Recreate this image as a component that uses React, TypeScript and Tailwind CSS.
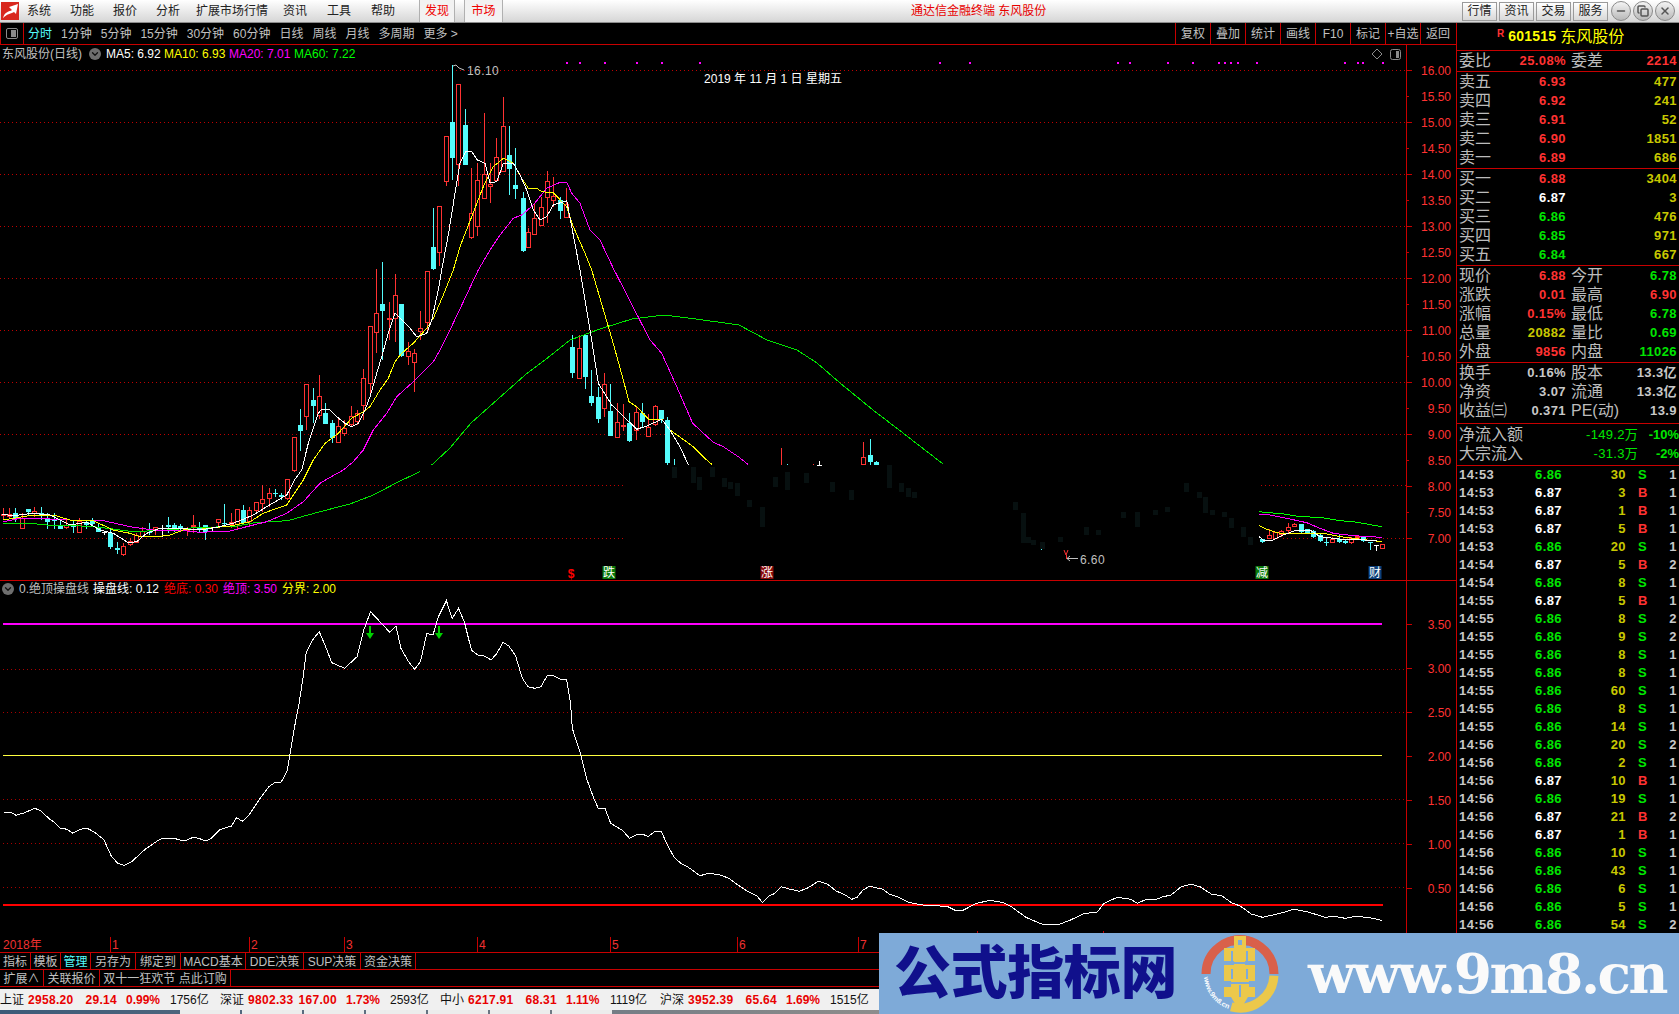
import { Minus, Copy, X, ChevronDown } from "lucide-react"

type Candle = [number, number, number, number, number, string]
type Pts = number[][]

const RED = "#ff3232"
const CYAN = "#54fcfc"
const LINE = "border-[#c80000]"

// all traces below are in crop coordinates, map() brings them back to page pixels
const map = (pts: Pts, ox: number, oy: number, sx = 3): Pts => pts.map(([x, y]) => [ox + x / sx, oy + y / 3])
const mapCandles = (list: Candle[], ox: number, oy: number): Candle[] =>
  list.map(([x, h, t, b, l, c]) => [Math.round(ox + x / 3), oy + h / 3, oy + t / 3, oy + b / 3, oy + l / 3, c])
const toStr = (pts: Pts) => pts.map(([x, y]) => `${x.toFixed(1)},${y.toFixed(1)}`).join(" ")

const candles: Candle[] = [
  ...mapCandles(
    [
      [8, 115, 133, 137, 150, "r"], [28, 115, 132, 142, 145, "r"], [46, 115, 130, 145, 155, "c"], [66, 128, 145, 178, 178, "r"],
      [85, 118, 118, 126, 135, "c"], [103, 112, 122, 132, 140, "r"], [124, 112, 128, 136, 150, "c"], [142, 130, 148, 155, 178, "c"],
      [162, 130, 148, 152, 178, "c"], [180, 150, 168, 176, 178, "c"], [198, 150, 165, 175, 178, "r"], [218, 150, 168, 172, 188, "c"],
      [238, 145, 152, 188, 188, "r"], [258, 150, 155, 165, 178, "c"], [275, 145, 152, 162, 170, "c"], [295, 160, 175, 185, 185, "c"],
      [313, 183, 187, 187, 196, "w"], [331, 175, 190, 232, 236, "c"], [351, 217, 235, 240, 253, "c"], [370, 220, 227, 255, 257, "r"],
      [389, 205, 212, 226, 228, "r"], [408, 190, 195, 218, 220, "r"], [427, 172, 183, 200, 202, "r"], [446, 160, 187, 190, 195, "c"],
      [466, 170, 172, 180, 195, "r"], [485, 165, 175, 178, 200, "w"], [503, 140, 165, 172, 190, "c"], [522, 160, 165, 178, 185, "c"],
      [541, 162, 168, 178, 185, "c"], [560, 170, 178, 182, 198, "r"], [580, 135, 165, 172, 190, "r"], [598, 155, 172, 178, 185, "c"],
      [616, 165, 165, 187, 210, "c"], [636, 170, 172, 178, 187, "w"], [655, 148, 148, 160, 172, "r"], [672, 102, 158, 162, 170, "c"],
      [692, 130, 155, 165, 175, "r"], [712, 118, 118, 165, 178, "r"], [730, 105, 120, 158, 162, "c"], [748, 110, 120, 155, 165, "r"],
      [769, 95, 95, 122, 125, "r"], [787, 45, 88, 103, 125, "r"], [806, 55, 70, 88, 110, "r"], [826, 58, 68, 72, 82, "c"],
      [844, 70, 75, 82, 90, "c"], [862, 28, 28, 88, 90, "r"],
    ],
    0,
    470,
  ),
  ...mapCandles(
    [
      [193, 592, 592, 692, 695, "r"], [211, 508, 555, 572, 632, "c"], [229, 433, 433, 530, 570, "r"], [250, 445, 480, 497, 550, "c"],
      [268, 405, 469, 527, 537, "r"], [286, 490, 520, 552, 552, "c"], [307, 540, 550, 593, 610, "c"], [325, 538, 558, 608, 610, "r"],
      [343, 540, 565, 582, 587, "r"], [364, 498, 529, 555, 558, "r"], [382, 510, 520, 545, 555, "r"], [400, 388, 415, 497, 540, "r"],
      [421, 259, 259, 432, 470, "r"], [439, 87, 220, 278, 338, "r"], [457, 67, 192, 213, 360, "c"], [478, 186, 235, 240, 300, "r"],
      [496, 102, 166, 238, 305, "r"], [514, 192, 192, 348, 350, "c"], [535, 307, 332, 350, 375, "r"], [553, 327, 340, 370, 455, "r"],
      [571, 213, 265, 277, 300, "r"], [592, 94, 94, 250, 280, "r"],
    ],
    230,
    240,
  ),
  ...mapCandles(
    [
      [280, 475, 590, 657, 660, "c"], [298, 468, 468, 610, 648, "r"], [319, 259, 259, 395, 408, "r"], [337, 45, 216, 323, 390, "c"],
      [355, 102, 102, 345, 408, "r"], [376, 178, 225, 345, 345, "c"], [394, 355, 490, 564, 566, "r"], [412, 340, 391, 530, 558, "r"],
      [433, 190, 373, 446, 446, "r"], [451, 340, 403, 412, 458, "r"], [469, 265, 322, 394, 394, "r"], [490, 142, 229, 365, 365, "r"],
      [508, 228, 315, 357, 435, "c"], [526, 295, 405, 416, 447, "c"], [548, 427, 444, 603, 606, "c"], [565, 535, 547, 593, 593, "r"],
      [583, 460, 505, 554, 554, "r"], [604, 440, 472, 527, 527, "r"], [622, 363, 394, 445, 518, "r"], [640, 380, 439, 452, 470, "r"],
      [661, 440, 450, 482, 506, "c"], [679, 415, 462, 503, 503, "r"],
    ],
    340,
    50,
  ),
  ...mapCandles(
    [
      [67, -15, 20, 98, 113, "c"], [88, -15, 25, 116, 116, "r"], [106, -15, -15, 110, 146, "c"], [124, 90, 168, 188, 198, "c"],
      [145, 140, 171, 238, 250, "c"], [163, 100, 133, 208, 232, "r"], [181, 132, 213, 288, 288, "c"], [202, 190, 247, 293, 293, "r"],
      [220, 192, 256, 262, 272, "r"], [238, 220, 250, 303, 305, "c"], [259, 200, 217, 272, 300, "r"], [277, 190, 220, 245, 262, "c"],
      [295, 222, 262, 290, 290, "r"], [316, 195, 199, 255, 258, "r"], [334, 210, 210, 238, 250, "c"], [352, 230, 240, 370, 375, "c"],
      [373, 358, 374, 374, 374, "t"], [694, 325, 374, 374, 374, "u"], [711, 372, 374, 374, 374, "t"], [790, 372, 374, 374, 374, "u"],
      [808, 363, 374, 374, 374, "w"], [940, 307, 352, 374, 374, "r"], [961, 297, 345, 366, 374, "c"], [979, 364, 366, 374, 374, "c"],
    ],
    550,
    340,
  ),
  ...mapCandles(
    [
      [787, 176, 178, 185, 190, "c"], [806, 148, 165, 177, 178, "r"], [826, 155, 155, 178, 178, "r"], [844, 150, 152, 165, 170, "r"],
      [863, 130, 142, 152, 158, "r"], [883, 128, 133, 142, 142, "r"], [902, 132, 132, 155, 158, "c"], [920, 146, 148, 158, 162, "c"],
      [940, 150, 152, 170, 175, "c"], [959, 158, 165, 182, 185, "c"], [977, 175, 185, 187, 197, "c"], [997, 170, 176, 188, 190, "r"],
      [1016, 165, 176, 185, 188, "c"], [1035, 178, 184, 188, 192, "c"], [1053, 172, 175, 190, 192, "r"], [1072, 165, 167, 172, 180, "r"],
      [1090, 167, 170, 182, 185, "c"], [1111, 185, 185, 190, 210, "c"], [1129, 195, 195, 197, 212, "w"], [1147, 193, 193, 208, 208, "r"],
    ],
    1000,
    480,
  ),
]

const ma5 = [
  ...map([[5, 133], [40, 137], [100, 130], [150, 135], [210, 165], [260, 157], [300, 180], [340, 190], [385, 218], [410, 215], [440, 190], [480, 175], [540, 175], [600, 180], [650, 172], [700, 160], [760, 135], [800, 110], [860, 75]], 0, 470),
  ...map([[195, 718], [215, 690], [235, 610], [265, 520], [275, 508], [300, 510], [320, 530], [345, 550], [365, 560], [385, 550], [405, 510], [420, 470], [440, 400], [455, 350], [475, 280], [495, 220], [515, 240], [540, 265], [560, 290], [590, 280], [605, 240], [625, 150]], 230, 240),
  ...map([[305, 660], [325, 555], [345, 430], [360, 340], [378, 303], [395, 305], [412, 330], [435, 340], [450, 398], [470, 395], [490, 340], [520, 340], [540, 375], [560, 420], [580, 480], [600, 510], [620, 500], [640, 465], [680, 452], [695, 530], [720, 660]], 340, 50),
  ...map([[125, 0], [145, 130], [185, 195], [240, 248], [260, 268], [290, 258], [335, 238], [360, 270], [390, 320], [415, 374]], 550, 340),
]
const ma10 = [
  ...map([[8, 150], [40, 145], [100, 135], [160, 135], [210, 150], [280, 152], [340, 180], [390, 190], [420, 200], [470, 200], [510, 195], [550, 180], [600, 178], [650, 172], [690, 168], [750, 155], [790, 130], [830, 115], [860, 105]], 0, 470),
  ...map([[220, 720], [250, 660], [285, 610], [325, 580], [365, 535], [400, 515], [420, 500], [450, 450], [475, 415], [495, 365], [515, 340], [550, 310], [590, 265], [610, 235], [640, 165], [660, 115]], 230, 240),
  ...map([[340, 660], [360, 590], [395, 500], [430, 410], [460, 350], [490, 325], [520, 340], [545, 385], [565, 415], [590, 415], [605, 425], [640, 428], [680, 470], [700, 530], [735, 610], [755, 660]], 340, 50),
  ...map([[187, 0], [220, 120], [237, 185], [260, 200], [295, 237], [335, 237], [360, 270], [430, 320], [470, 360], [487, 374]], 550, 340),
]
const ma20 = [
  ...map([[10, 155], [60, 145], [150, 147], [210, 150], [300, 150], [345, 160], [400, 172], [460, 180], [530, 180], [600, 187], [690, 183], [740, 170], [800, 155], [860, 130], [910, 95], [960, 40]], 0, 470),
  ...map([[290, 718], [340, 690], [370, 665], [400, 630], [430, 570], [470, 520], [500, 470], [550, 425], [610, 365], [630, 330], [660, 270]], 230, 240),
  ...map([[415, 660], [450, 600], [480, 555], [520, 505], [545, 495], [580, 465], [620, 415], [660, 397], [680, 397], [695, 430], [720, 460], [750, 540], [780, 570], [820, 655]], 340, 50),
  ...map([[300, 0], [335, 40], [380, 140], [428, 250], [490, 307], [520, 320], [565, 350], [595, 374]], 550, 340),
]
const ma60a = [
  ...map([[8, 160], [90, 160], [140, 165], [200, 165], [300, 172], [400, 185], [500, 180], [600, 172], [700, 170], [770, 157], [830, 155], [870, 150], [960, 125], [1050, 102], [1120, 75], [1200, 33]], 0, 470),
  [420, 471.7],
]
const ma60b: Pts = [[431.7, 465], [450, 448], [471, 423], [525, 375], [550, 356], [570, 340], [600, 329], [632, 319], [664, 315], [696, 319], [739, 325], [767, 340], [797, 350], [817, 363], [840, 383], [873, 410], [903, 433], [943, 464]]

const tail = {
  white: map([[778, 170], [790, 180], [820, 180], [850, 165], [890, 150], [930, 150], [960, 170], [1000, 175], [1040, 180], [1080, 178], [1110, 182], [1130, 182]], 1000, 480),
  yellow: map([[778, 137], [800, 148], [830, 158], [860, 162], [940, 160], [980, 162], [1020, 170], [1060, 175], [1100, 180], [1145, 185]], 1000, 480),
  magenta: map([[778, 103], [800, 103], [860, 115], [920, 128], [960, 145], [1000, 160], [1060, 167], [1145, 172]], 1000, 480),
  green: map([[778, 95], [800, 98], [840, 100], [900, 110], [960, 112], [1020, 122], [1060, 125], [1100, 132], [1145, 140]], 1000, 480),
}

const indicator = [
  ...map([[8, 666], [24, 666], [36, 676], [55, 668], [78, 655], [92, 663], [110, 686], [120, 695], [135, 714], [150, 718], [163, 730], [180, 718], [195, 715], [210, 725], [232, 748], [250, 800], [264, 820], [278, 826], [295, 815], [325, 778], [358, 748], [370, 745], [390, 745], [405, 751], [418, 751], [432, 742], [445, 745], [460, 753], [472, 746], [492, 720], [505, 713], [518, 709], [530, 683], [543, 694], [558, 675], [580, 630], [602, 590], [615, 578], [630, 576], [643, 542], [650, 490], [660, 410], [670, 340], [678, 270], [686, 188], [700, 150], [715, 125], [728, 165], [743, 218], [755, 225], [772, 235], [800, 200], [815, 120], [830, 65], [858, 105], [873, 127], [887, 108], [898, 175], [915, 215], [929, 238], [942, 215], [956, 130], [970, 135], [982, 80], [1000, 32], [1013, 85], [1027, 55], [1040, 95], [1056, 180], [1070, 195], [1085, 198], [1100, 210], [1113, 190], [1127, 157], [1140, 168], [1155, 198], [1170, 265], [1183, 290], [1198, 295], [1212, 290], [1225, 258], [1238, 256], [1255, 268], [1269, 268], [1278, 340], [1282, 415], [1300, 490], [1315, 570], [1330, 625], [1340, 655], [1355, 655], [1368, 700], [1395, 722], [1410, 745], [1425, 735], [1440, 733], [1452, 740], [1468, 723], [1482, 726], [1495, 765], [1510, 802], [1525, 820], [1540, 830], [1568, 857]], 0, 590, 2.24),
  ...map([[20, 220], [45, 225], [65, 235], [85, 255], [105, 273], [128, 288], [140, 308], [155, 288], [168, 280], [182, 260], [200, 267], [222, 274], [240, 265], [265, 244], [285, 252], [305, 273], [325, 285], [340, 298], [352, 292], [365, 270], [380, 259], [410, 268], [425, 283], [445, 292], [470, 308], [500, 315], [530, 317], [555, 320], [570, 330], [590, 330], [620, 310], [650, 301], [680, 308], [695, 318], [730, 352], [765, 372], [805, 373], [830, 360], [860, 341], [890, 336], [905, 310], [935, 292], [965, 298], [980, 310], [1000, 298], [1025, 297], [1035, 291], [1055, 285], [1078, 260], [1100, 253], [1120, 260], [1145, 282], [1170, 288], [1190, 308], [1210, 318], [1235, 342], [1260, 352], [1300, 340], [1330, 328], [1360, 335], [1400, 352], [1420, 349], [1445, 355], [1470, 349], [1500, 353], [1527, 361]], 700, 800, 2.24),
]

// barely visible candles left under the faded part of the chart
const ghosts: number[][] = [
  [674, 467, 478], [693, 467, 483], [699, 477, 490], [712, 467, 477], [724, 478, 487], [730, 482, 489], [737, 483, 496], [749, 500, 507], [762, 507, 527],
  [775, 477, 487], [787, 472, 490], [806, 473, 483], [832, 482, 492], [851, 490, 500], [889, 465, 488], [901, 483, 492], [908, 488, 497], [914, 492, 498],
  [1015, 502, 510], [1023, 513, 543], [1028, 537, 543], [1033, 540, 545], [1042, 542, 549], [1060, 537, 542], [1086, 527, 535], [1098, 530, 535],
  [1123, 512, 518], [1137, 512, 527], [1155, 510, 515], [1167, 507, 512], [1186, 483, 492], [1199, 492, 498], [1205, 497, 513], [1212, 510, 515],
  [1224, 512, 517], [1231, 518, 528], [1243, 527, 537], [1250, 537, 545],
]

const magentaDots = [566, 579, 604, 636, 661, 699, 939, 969, 1117, 1129, 1167, 1192, 1218, 1224, 1230, 1237, 1256, 1344, 1357, 1362, 1382]
const mainGrid = [70, 122, 174, 226, 278, 330, 382, 434]
const indicatorGrid = [669, 712, 799, 843, 887]
const priceAxis = ["16.00", "15.50", "15.00", "14.50", "14.00", "13.50", "13.00", "12.50", "12.00", "11.50", "11.00", "10.50", "10.00", "9.50", "9.00", "8.50", "8.00", "7.50", "7.00"]
const indAxis = ["3.50", "3.00", "2.50", "2.00", "1.50", "1.00", "0.50"]

function CandleMark({ c }: { c: Candle }) {
  const [x, hi, top, bot, lo, kind] = c
  const yh = Math.round(hi)
  const yt = Math.round(top)
  const yb = Math.round(bot)
  const yl = Math.round(lo)
  if (kind === "t" || kind === "u") {
    return <rect x={x} y={yh} width={1} height={yt - yh} fill={kind === "t" ? CYAN : RED} />
  }
  if (kind === "w") {
    return (
      <g fill="#fff">
        <rect x={x} y={yh} width={1} height={Math.max(yl - yh, 1)} />
        <rect x={x - 2} y={yt} width={5} height={1} />
      </g>
    )
  }
  const color = kind === "r" ? RED : CYAN
  return (
    <g>
      <rect x={x} y={yh} width={1} height={Math.max(yl - yh, 1)} fill={color} />
      {kind === "r" ? (
        <rect x={x - 1.5} y={yt + 0.5} width={4} height={Math.max(yb - yt - 1, 1)} fill="#000" stroke={color} strokeWidth={1} />
      ) : (
        <rect x={x - 2} y={yt} width={5} height={Math.max(yb - yt, 1)} fill={color} />
      )}
    </g>
  )
}

function Poly({ pts, color }: { pts: Pts; color: string }) {
  return <polyline points={toStr(pts)} fill="none" stroke={color} strokeWidth={1} shapeRendering="crispEdges" />
}

function Signal({ x, label, color }: { x: number; label: string; color: string }) {
  return (
    <g>
      <rect x={x - 6.5} y={566} width={13} height={13} fill={color} />
      <text x={x} y={577} fontSize={12} fill="#fff" textAnchor="middle">
        {label}
      </text>
    </g>
  )
}

function ChartCanvas() {
  return (
    <svg width={1456} height={892} viewBox="0 45 1456 892" className="block">
      {mainGrid.map((y) => (
        <line key={y} x1={0} x2={1406} y1={y + 0.5} y2={y + 0.5} stroke="#c00000" strokeDasharray="1 3" />
      ))}
      {[485, 538].map((y) => (
        <g key={y}>
          <line x1={2} x2={625} y1={y + 0.5} y2={y + 0.5} stroke="#c00000" strokeDasharray="1 3" />
          <line x1={y === 485 ? 1261 : 1283} x2={1406} y1={y + 0.5} y2={y + 0.5} stroke="#c00000" strokeDasharray="1 3" />
        </g>
      ))}
      {indicatorGrid.map((y) => (
        <line key={y} x1={3} x2={1406} y1={y + 0.5} y2={y + 0.5} stroke="#a80000" strokeDasharray="1 3" />
      ))}

      {ghosts.map(([x, a, b], i) => (
        <rect key={i} x={x - 2} y={a} width={5} height={b - a} fill="#071010" />
      ))}

      {magentaDots.map((x) => (
        <rect key={x} x={x} y={62} width={2} height={2} fill="#ff00ff" />
      ))}

      <g shapeRendering="crispEdges">
        {candles.map((c, i) => (
          <CandleMark key={i} c={c} />
        ))}
      </g>
      <Poly pts={ma60a} color="#00e600" />
      <Poly pts={ma60b} color="#00e600" />
      <Poly pts={ma20} color="#ff00ff" />
      <Poly pts={ma10} color="#ffff00" />
      <Poly pts={ma5} color="#ffffff" />
      <Poly pts={tail.green} color="#00ff00" />
      <Poly pts={tail.magenta} color="#ff00ff" />
      <Poly pts={tail.yellow} color="#ffff00" />
      <Poly pts={tail.white} color="#ffffff" />

      <polyline points="453,66 456,65 459,68 464,70" fill="none" stroke="#c0c0c0" />
      <text x={467} y={75} fontSize={12} fill="#c0c0c0" letterSpacing={0.4}>
        16.10
      </text>
      <text x={773} y={83} fontSize={12} fill="#fff" textAnchor="middle">
        2019 年 11 月 1 日 星期五
      </text>

      <polyline points="1064,550 1066,555 1068,550" fill="none" stroke={RED} />
      <rect x={1066} y={555} width={1} height={4} fill={RED} />
      <path d="M1078 558.5 H1067 M1070 556 L1067 558.5 L1070 561" fill="none" stroke="#c0c0c0" />
      <text x={1080} y={564} fontSize={12} fill="#c0c0c0" letterSpacing={0.4}>
        6.60
      </text>
      <rect x={1041} y={549} width={1} height={1} fill={CYAN} />

      <text x={571} y={578} fontSize={12} fontWeight={700} fill="#ff0000" textAnchor="middle">
        $
      </text>
      <Signal x={609} label="跌" color="#0a7a0a" />
      <Signal x={767} label="涨" color="#8a0a0a" />
      <Signal x={1262} label="减" color="#0a7a0a" />
      <Signal x={1375} label="财" color="#0c3f7a" />

      <path d="M1377 49 L1382 54 L1377 59 L1372 54 Z" fill="none" stroke="#8a8a8a" />
      <rect x={1390.5} y={49.5} width={10} height={10} rx={2} fill="#000" stroke="#8a8a8a" />
      <rect x={1396} y={51} width={3} height={7} fill="#8a8a8a" />

      {/* lines of the lower pane */}
      <rect x={3} y={623} width={1379} height={2} fill="#ff00ff" />
      <rect x={3} y={755} width={1379} height={1} fill="#ffff40" />
      <rect x={3} y={904} width={1380} height={2} fill="#ff0000" />
      <Poly pts={indicator} color="#ffffff" />
      {[370, 439].map((x) => (
        <path key={x} d={`M${x - 1} 626 H${x + 1} V633 H${x + 4} L${x} 639 L${x - 4} 633 H${x - 1} Z`} fill="#00d000" />
      ))}

      {/* frame and axes */}
      <rect x={0} y={580} width={1456} height={1} fill="#c80000" />
      <rect x={1406} y={45} width={1} height={892} fill="#c80000" />
      {priceAxis.map((p, i) => {
        const y = 70 + i * 26
        return (
          <g key={p}>
            <rect x={1406} y={y} width={i % 2 ? 3 : 6} height={1} fill="#c80000" />
            <text x={1451} y={y + 5} fontSize={12} fill={RED} textAnchor="end">
              {p}
            </text>
          </g>
        )
      })}
      {indAxis.map((p, i) => {
        const y = 624 + i * 44
        return (
          <g key={p}>
            <rect x={1406} y={y} width={6} height={1} fill="#c80000" />
            <text x={1451} y={y + 5} fontSize={12} fill={RED} textAnchor="end">
              {p}
            </text>
          </g>
        )
      })}
      <rect x={977} y={931} width={1} height={6} fill="#c80000" />
      <rect x={1103} y={931} width={1} height={6} fill="#c80000" />
    </svg>
  )
}

function PaneToggle() {
  return (
    <span className="flex h-[11px] w-[12px] justify-end rounded-[2px] border border-[#8a8a8a] p-px">
      <span className="block h-full w-[5px] bg-[#8a8a8a]" />
    </span>
  )
}

function RoundChevron() {
  return (
    <span className="flex h-[12px] w-[12px] items-center justify-center rounded-full bg-[#6e6e6e]">
      <ChevronDown size={10} strokeWidth={3} color="#111" />
    </span>
  )
}

function TopBar() {
  const menus = ["系统", "功能", "报价", "分析"]
  const menus2 = ["资讯", "工具", "帮助"]
  return (
    <div className="flex h-[23px] items-center border-b border-[#8c8c8c] bg-gradient-to-b from-white to-[#d6d6d6] text-[12px] text-[#222]">
      <svg width={18} height={18} viewBox="0 0 18 18" className="ml-px mr-2 shrink-0">
        <rect width={18} height={18} fill="#d8281e" />
        <path d="M2 16 C4 9 8 10 11 8 L8 5 L17 2 L15 12 L13 10 C9 12 6 12 2 16 Z" fill="#fff" />
      </svg>
      <div className="flex gap-[19px]">
        {menus.map((m) => (
          <span key={m}>{m}</span>
        ))}
      </div>
      <span className="ml-[16px]">扩展市场行情</span>
      <div className="ml-[15px] flex gap-[20px]">
        {menus2.map((m) => (
          <span key={m}>{m}</span>
        ))}
      </div>
      <div className="ml-[24px] flex h-full w-[36px] items-center justify-center border-x border-[#b0b0b0] bg-[#f2f2f2] text-[#f00000]">发现</div>
      <div className="ml-[9px] flex h-full w-[39px] items-center justify-center border-x border-[#b0b0b0] bg-[#f2f2f2] text-[#f00000]">市场</div>
      <div className="flex-1 pr-[8px] text-center text-[#e80000]">通达信金融终端 东风股份</div>
      <div className="flex gap-[2px]">
        {["行情", "资讯", "交易", "服务"].map((m) => (
          <div key={m} className="flex h-[19px] w-[35px] items-center justify-center border border-[#9a9a9a] bg-gradient-to-b from-white to-[#d8d8d8]">
            {m}
          </div>
        ))}
      </div>
      <div className="ml-[3px] mr-[4px] flex gap-[2px]">
        {[Minus, Copy, X].map((Icon, i) => (
          <div key={i} className="flex h-[20px] w-[20px] items-center justify-center rounded-full border border-[#8a8a8a] bg-gradient-to-b from-[#f4f4f4] to-[#b8b8b8]">
            <Icon size={12} strokeWidth={3} color="#555" />
          </div>
        ))}
      </div>
    </div>
  )
}

function Toolbar() {
  const left = ["1分钟", "5分钟", "15分钟", "30分钟", "60分钟", "日线", "周线", "月线", "多周期", "更多 >"]
  const right = ["复权", "叠加", "统计", "画线", "F10", "标记", "+自选", "返回"]
  return (
    <div className={`flex h-[22px] items-center border-b ${LINE} text-[12px] text-[#c0c0c0]`}>
      <div className={`flex h-full w-[24px] items-center justify-center border-x ${LINE}`}>
        <PaneToggle />
      </div>
      <div className="ml-[4px] flex gap-[9px]">
        <span className="text-[#54fcfc]">分时</span>
        {left.map((t) => (
          <span key={t}>{t}</span>
        ))}
      </div>
      <div className="ml-auto flex h-full pr-px">
        {right.map((t) => (
          <span key={t} className={`flex h-full w-[35px] items-center justify-center border-l ${LINE} whitespace-nowrap`}>
            {t}
          </span>
        ))}
      </div>
    </div>
  )
}

function TimeAxis() {
  const cells = [
    { w: "w-[110px]", t: "2018年" },
    { w: "w-[139px]", t: "1" },
    { w: "w-[95px]", t: "2" },
    { w: "w-[133px]", t: "3" },
    { w: "w-[133px]", t: "4" },
    { w: "w-[127px]", t: "5" },
    { w: "w-[121px]", t: "6" },
    { w: "flex-1", t: "7" },
  ]
  return (
    <div className={`flex h-[16px] items-center border-b ${LINE} text-[12px] text-[#f03030]`}>
      {cells.map((c, i) => (
        <span key={c.t} className={`${c.w} h-full leading-[16px] ${i ? `border-l ${LINE} pl-px` : "pl-[3px]"}`}>
          {c.t}
        </span>
      ))}
    </div>
  )
}

function TabRow({ items }: { items: { t: string; w: string; on?: boolean }[] }) {
  return (
    <div className={`flex h-[17px] items-center border-b ${LINE} text-[12px] text-[#c0c0c0]`}>
      {items.map((i) => (
        <span key={i.t} className={`${i.w} flex h-full items-center justify-center border-r ${LINE} whitespace-nowrap pt-px ${i.on ? "text-[#54fcfc]" : ""}`}>
          {i.t}
        </span>
      ))}
    </div>
  )
}

function LeftColumn() {
  return (
    <div className="flex w-[1456px] shrink-0 flex-col">
      <Toolbar />
      <div className="relative h-[892px]">
        <ChartCanvas />
        <div className="absolute left-[2px] top-[1px] flex h-[16px] items-center text-[12px]">
          <span className="w-[84px] text-[#c0c0c0]">东风股份(日线)</span>
          <span className="ml-[3px]">
            <RoundChevron />
          </span>
          <span className="ml-[5px] w-[58px] text-white">MA5: 6.92</span>
          <span className="w-[65px] text-[#ffff00]">MA10: 6.93</span>
          <span className="w-[65px] text-[#ff00ff]">MA20: 7.01</span>
          <span className="text-[#00ff00]">MA60: 7.22</span>
        </div>
        <div className="absolute left-[2px] top-[536px] flex h-[16px] items-center text-[12px]">
          <RoundChevron />
          <span className="ml-[5px] w-[74px] text-[#c0c0c0]">0.绝顶操盘线</span>
          <span className="w-[71px] text-white">操盘线: 0.12</span>
          <span className="w-[59px] text-[#ff0000]">绝底: 0.30</span>
          <span className="w-[59px] text-[#ff00ff]">绝顶: 3.50</span>
          <span className="text-[#ffff00]">分界: 2.00</span>
        </div>
      </div>
      <TimeAxis />
      <TabRow
        items={[
          { t: "指标", w: "w-[31px]" },
          { t: "模板", w: "w-[30px]" },
          { t: "管理", w: "w-[30px]", on: true },
          { t: "另存为", w: "w-[45px]" },
          { t: "绑定到", w: "w-[45px]" },
          { t: "MACD基本", w: "w-[65px]" },
          { t: "DDE决策", w: "w-[58px]" },
          { t: "SUP决策", w: "w-[57px]" },
          { t: "资金决策", w: "w-[55px]" },
        ]}
      />
      <TabRow
        items={[
          { t: "扩展∧", w: "w-[44px]" },
          { t: "关联报价", w: "w-[56px]" },
          { t: "双十一狂欢节 点此订购", w: "w-[131px]" },
        ]}
      />
    </div>
  )
}

const num = "text-[13px] font-bold tracking-[0.4px]"
const label = "text-[16px] text-[#bcbcbc]"

function BookRow({ name, price, priceColor, qty }: { name: string; price: string; priceColor: string; qty: string }) {
  return (
    <div className="grid h-[19px] grid-cols-[107px_106px] gap-x-[5px] pl-[2px] leading-[19px]">
      <div className="flex justify-between">
        <span className={label}>{name}</span>
        <span className={`${num} ${priceColor}`}>{price}</span>
      </div>
      <div className={`${num} text-right text-[#c8c800]`}>{qty}</div>
    </div>
  )
}

function PairRow({ a, av, ac, b, bv, bc }: { a: string; av: string; ac: string; b: string; bv: string; bc: string }) {
  return (
    <div className="grid h-[19px] grid-cols-[107px_106px] gap-x-[5px] pl-[2px] leading-[19px]">
      <div className="flex justify-between">
        <span className={label}>{a}</span>
        <span className={`${num} ${ac}`}>{av}</span>
      </div>
      <div className="flex justify-between">
        <span className={label}>{b}</span>
        <span className={`${num} ${bc}`}>{bv}</span>
      </div>
    </div>
  )
}

const R = "text-[#ff3232]"
const G = "text-[#00e600]"
const Y = "text-[#c8c800]"
const W = "text-[#c8c8c8]"

const ticks: [string, string, string, string, string][] = [
  ["14:53", "6.86", "30", "S", "1"], ["14:53", "6.87", "3", "B", "1"], ["14:53", "6.87", "1", "B", "1"], ["14:53", "6.87", "5", "B", "1"],
  ["14:53", "6.86", "20", "S", "1"], ["14:54", "6.87", "5", "B", "2"], ["14:54", "6.86", "8", "S", "1"], ["14:55", "6.87", "5", "B", "1"],
  ["14:55", "6.86", "8", "S", "2"], ["14:55", "6.86", "9", "S", "2"], ["14:55", "6.86", "8", "S", "1"], ["14:55", "6.86", "8", "S", "1"],
  ["14:55", "6.86", "60", "S", "1"], ["14:55", "6.86", "8", "S", "1"], ["14:55", "6.86", "14", "S", "1"], ["14:56", "6.86", "20", "S", "2"],
  ["14:56", "6.86", "2", "S", "1"], ["14:56", "6.87", "10", "B", "1"], ["14:56", "6.86", "19", "S", "1"], ["14:56", "6.87", "21", "B", "2"],
  ["14:56", "6.87", "1", "B", "1"], ["14:56", "6.86", "10", "S", "1"], ["14:56", "6.86", "43", "S", "1"], ["14:56", "6.86", "6", "S", "1"],
  ["14:56", "6.86", "5", "S", "1"], ["14:56", "6.86", "54", "S", "2"],
]

function QuotePanel() {
  return (
    <div className={`flex w-[223px] shrink-0 flex-col overflow-hidden border-l ${LINE}`}>
      <div className={`flex h-[28px] items-center border-b ${LINE} pl-[40px]`}>
        <span className="mb-[6px] text-[10px] font-bold text-[#ff3232]">R</span>
        <span className="ml-[4px] text-[14px] font-bold tracking-[0.2px] text-[#ffff00]">601515</span>
        <span className="ml-[4px] text-[16px] text-[#ffff00]">东风股份</span>
      </div>
      <div className={`border-b ${LINE} pb-px`}>
        <PairRow a="委比" av="25.08%" ac={R} b="委差" bv="2214" bc={R} />
      </div>
      <div className={`border-b ${LINE} pb-px`}>
        <BookRow name="卖五" price="6.93" priceColor={R} qty="477" />
        <BookRow name="卖四" price="6.92" priceColor={R} qty="241" />
        <BookRow name="卖三" price="6.91" priceColor={R} qty="52" />
        <BookRow name="卖二" price="6.90" priceColor={R} qty="1851" />
        <BookRow name="卖一" price="6.89" priceColor={R} qty="686" />
      </div>
      <div className={`border-b ${LINE} pb-px`}>
        <BookRow name="买一" price="6.88" priceColor={R} qty="3404" />
        <BookRow name="买二" price="6.87" priceColor="text-white" qty="3" />
        <BookRow name="买三" price="6.86" priceColor={G} qty="476" />
        <BookRow name="买四" price="6.85" priceColor={G} qty="971" />
        <BookRow name="买五" price="6.84" priceColor={G} qty="667" />
      </div>
      <div className={`border-b ${LINE} pb-px`}>
        <PairRow a="现价" av="6.88" ac={R} b="今开" bv="6.78" bc={G} />
        <PairRow a="涨跌" av="0.01" ac={R} b="最高" bv="6.90" bc={R} />
        <PairRow a="涨幅" av="0.15%" ac={R} b="最低" bv="6.78" bc={G} />
        <PairRow a="总量" av="20882" ac={Y} b="量比" bv="0.69" bc={G} />
        <PairRow a="外盘" av="9856" ac={R} b="内盘" bv="11026" bc={G} />
      </div>
      <div className={`border-b ${LINE} pb-[3px]`}>
        <PairRow a="换手" av="0.16%" ac={W} b="股本" bv="13.3亿" bc={W} />
        <PairRow a="净资" av="3.07" ac={W} b="流通" bv="13.3亿" bc={W} />
        <PairRow a="收益㈢" av="0.371" ac={W} b="PE(动)" bv="13.9" bc={W} />
      </div>
      <div className={`border-b ${LINE} pb-[2px] pt-px`}>
        {[
          ["净流入额", "-149.2万", "-10%"],
          ["大宗流入", "-31.3万", "-2%"],
        ].map(([a, b, c]) => (
          <div key={a} className="flex h-[19px] pl-[2px] leading-[19px]">
            <span className={`${label} flex-1`}>{a}</span>
            <span className="text-[13px] tracking-[0.3px] text-[#00e600]">{b}</span>
            <span className="w-[41px] text-right text-[13px] font-bold text-[#00e600]">{c}</span>
          </div>
        ))}
      </div>
      <div>
        {ticks.map(([t, p, v, s, n], i) => (
          <div key={i} className={`grid h-[18.02px] grid-cols-[32px_71px_64px_24px_27px] pl-[2px] leading-[18px] ${num}`}>
            <span className={W}>{t}</span>
            <span className={`text-right ${p === "6.87" ? "text-white" : G}`}>{p}</span>
            <span className={`text-right ${Y}`}>{v}</span>
            <span className={`pl-[12px] ${s === "B" ? R : G}`}>{s}</span>
            <span className={`text-right ${W}`}>{n}</span>
          </div>
        ))}
      </div>
    </div>
  )
}

function IndexCell({ name, val, chg, pct, amt }: { name: string; val: string; chg: string; pct: string; amt: string }) {
  return (
    <div className="flex w-[220px] shrink-0 items-center text-[12px]">
      <span className="w-[28px] text-[#111]">{name}</span>
      <span className="w-[48px] font-bold tracking-[0.3px] text-[#e80000]">{val}</span>
      <span className="w-[41px] text-right font-bold tracking-[0.3px] text-[#e80000]">{chg}</span>
      <span className="w-[53px] pl-[9px] font-bold text-[#e80000]">{pct}</span>
      <span className="text-[#111]">{amt}</span>
    </div>
  )
}

function StatusBar() {
  return (
    <div className="flex h-[21px] items-center bg-[#f0f0f0]">
      <IndexCell name="上证" val="2958.20" chg="29.14" pct="0.99%" amt="1756亿" />
      <IndexCell name="深证" val="9802.33" chg="167.00" pct="1.73%" amt="2593亿" />
      <IndexCell name="中小" val="6217.91" chg="68.31" pct="1.11%" amt="1119亿" />
      <IndexCell name="沪深" val="3952.39" chg="65.64" pct="1.69%" amt="1515亿" />
    </div>
  )
}

function TaskStrip() {
  return (
    <div className="flex h-[4px] items-stretch bg-gradient-to-r from-[#3c5a78] via-[#8a8a8a] to-[#c8c8c8]">
      <div className="ml-[180px] flex gap-[2px]">
        {[1, 2, 3, 4, 5, 6, 7].map((i) => (
          <span key={i} className="w-[60px] bg-[#ececec]" />
        ))}
      </div>
    </div>
  )
}

function BannerLogo() {
  const arc = (a: number, b: number) => {
    const r = 34
    const cx = 39
    const cy = 39
    const p = (d: number) => [cx + r * Math.cos((d * Math.PI) / 180), cy + r * Math.sin((d * Math.PI) / 180)]
    const [x1, y1] = p(a)
    const [x2, y2] = p(b)
    return `M${x1} ${y1} A${r} ${r} 0 0 1 ${x2} ${y2}`
  }
  return (
    <svg width={78} height={78} viewBox="0 0 78 78" className="shrink-0">
      <path d={arc(180, 285)} fill="none" stroke="#d9604a" strokeWidth={9} />
      <path d={arc(255, 360)} fill="none" stroke="#d9604a" strokeWidth={9} />
      <path d={arc(3, 105)} fill="none" stroke="#ecc84a" strokeWidth={9} />
      <defs>
        <path id="logoArc" d="M3 42 A36 36 0 0 0 32 75" />
      </defs>
      <text fontSize={7} fontWeight={700} fill="#fff">
        <textPath href="#logoArc">www.9m8.cn</textPath>
      </text>
      <path d="M33 1 H45 V13 H54 V26 H44 V30 H54 V46 H48 V52 H54 V62 H47 L41 72 L36 72 L30 62 H23 V52 H30 V46 H23 V30 H33 V26 H23 V13 H33 Z" fill="#ecc84a" />
      <rect x={37} y={5} width={4} height={5} fill="#7eaad8" />
      <path d="M23 28 H54 M31 16 V26 M46 16 V26 M23 48 H54 M31 34 V44 M46 34 V44 M39 50 V62" stroke="#7eaad8" strokeWidth={2} />
    </svg>
  )
}

function Banner() {
  return (
    <div className="absolute bottom-0 left-[879px] right-0 flex h-[81px] items-center bg-[#7eaad8] pl-[15px]">
      <span className="w-[286px] whitespace-nowrap text-[57px] font-black leading-none tracking-[-0.4px] text-[#10108c]">公式指标网</span>
      <span className="ml-[21px] mt-px">
        <BannerLogo />
      </span>
      <span className="ml-[29px] whitespace-nowrap font-['DejaVu_Serif',serif] text-[55px] font-bold leading-none tracking-[-2.5px] text-[#fafafa]">www.9m8.cn</span>
    </div>
  )
}

export default function App() {
  return (
    <div className="relative flex h-[1014px] w-[1679px] flex-col overflow-hidden bg-black font-['Liberation_Sans','Noto_Sans_CJK_SC',sans-serif]">
      <TopBar />
      <div className="flex h-[966px]">
        <LeftColumn />
        <QuotePanel />
      </div>
      <StatusBar />
      <TaskStrip />
      <Banner />
    </div>
  )
}
